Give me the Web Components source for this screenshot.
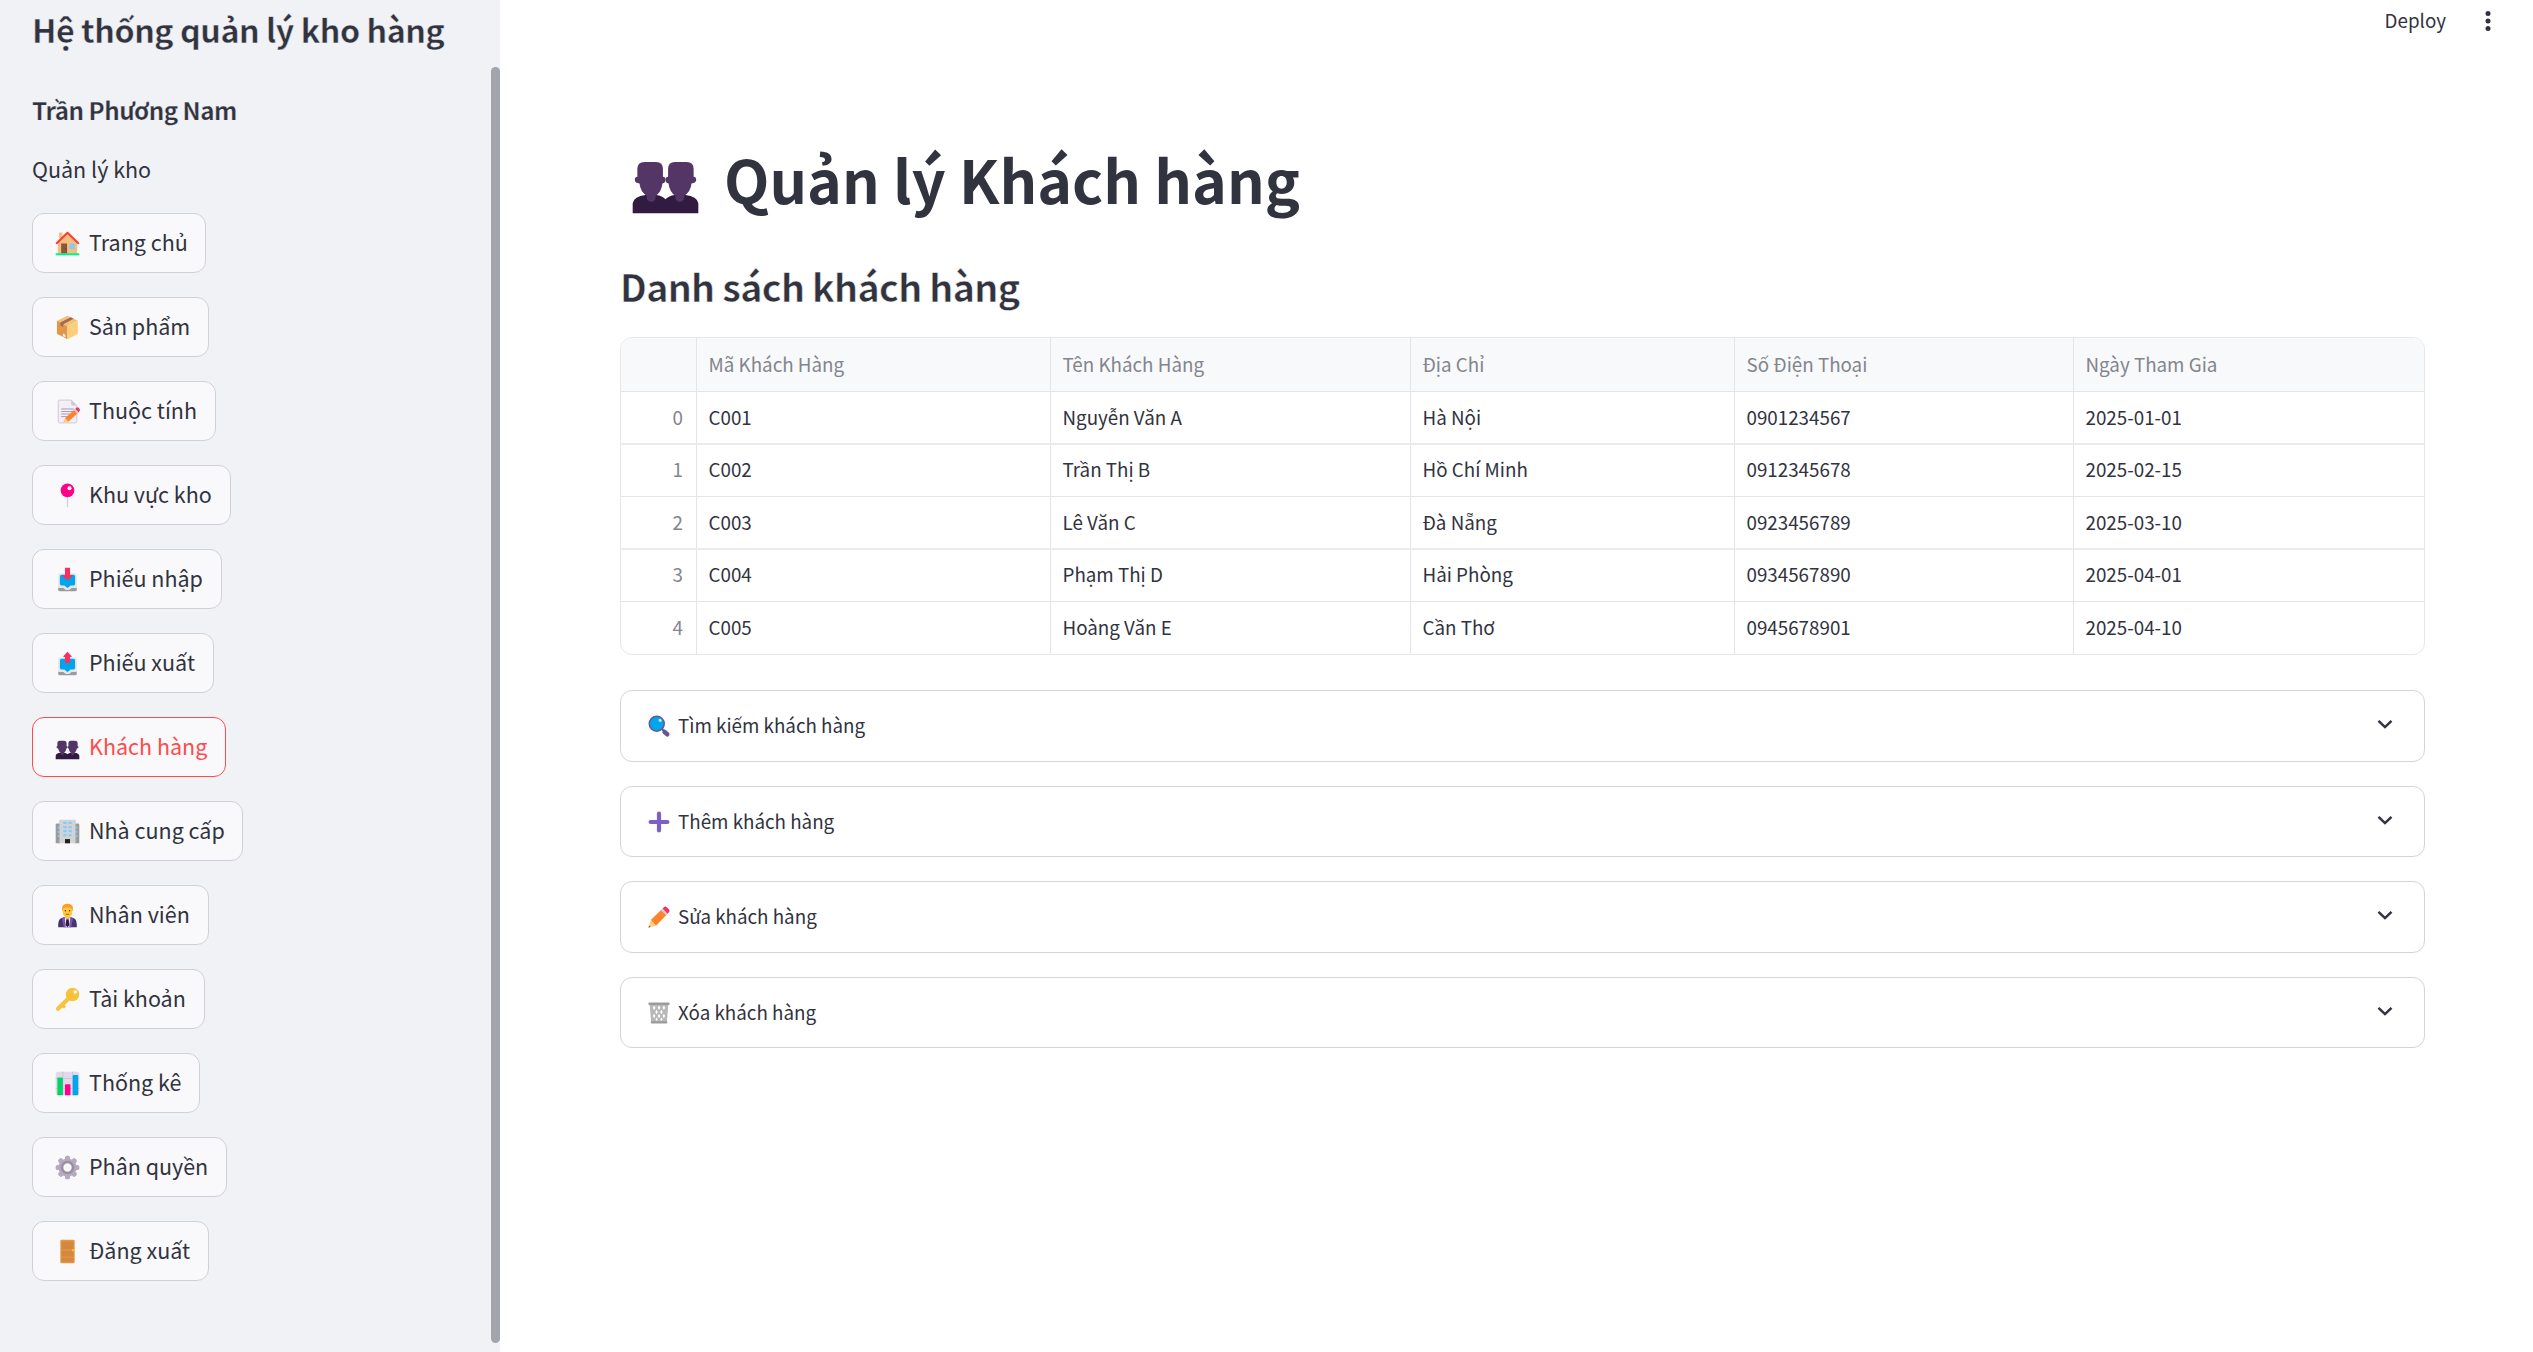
<!DOCTYPE html>
<html lang="vi">
<head>
<meta charset="utf-8">
<title>Quản lý Khách hàng</title>
<style>
  html, body { margin: 0; height: 100%; overflow: hidden; background: #fff; }
  body { font-family: "Noto Sans CJK SC", "Noto Sans", sans-serif; color: #31333f; }
</style>
</head>
<body>
<warehouse-app></warehouse-app>
<script>
const BUST = 'M7 8.1h5q2.900 0 2.900 3v3.300q1.200.100 1.100 1.400t-1.300 1.500q-.400 3.600-2.900 5.200v1q-.300 1.600-1.900 1.600t-1.900-1.600v-1q-2.700-1.600-3.100-5.200Q3 17.100 2.900 15.800t1.100-1.400v-3.300q0-3 3-3z';
const ICONS = {
  home: `<path fill="#f3c07b" d="M6 3h4v7H6z"/><path fill="#f3c07b" d="M16 4 4.5 15v14h23V15z"/><path fill="#8c5543" d="M8.5 16h7v12h-7z"/><path fill="#83cbff" d="M18.5 16h6v6.5h-6z"/><path fill="none" stroke="#ff3838" stroke-width="2.4" stroke-linecap="round" stroke-linejoin="round" d="M3.2 15.6 16 3.2l12.8 12.4"/><path fill="#00f397" d="M2 27.6h28V30H2z"/><circle cx="14" cy="22.3" r=".8" fill="#5a3328"/>`,
  box: `<path fill="#f3c07b" d="M16 2 28.3 8 16 14.6 3.5 8z"/><path fill="#e19747" d="M3.5 8 16 14.6V30L3.5 23.4z"/><path fill="#ffce7c" d="M28.3 8 16 14.6V30l12.3-6.6z"/><path fill="#a56953" d="m19.8 3.9 3.6 1.700L11 12.200v3.200l-3.600-2v-3.200z"/><path fill="#f3eef8" d="m10.500 23 3 1.600v3.300l-3-1.600z"/>`,
  memo: `<path fill="#f3eef8" stroke="#cdc4d6" stroke-width="1.1" d="M5 4q0-1.5 1.5-1.5h14L27 9v19q0 1.5-1.5 1.5h-19Q5 29.500 5 28z"/><path fill="#cdc4d6" d="M20.500 2.500V7.500Q20.500 9 22 9h5z"/><path stroke="#998ea4" stroke-width="1" d="M8.500 13h15M8.500 16h15M8.500 19h12M8.500 22h9"/><path fill="#ff822d" d="m13 24 12-11 4 4.300-12 10.700z"/><path fill="#f92f60" d="m25 13 2-1.800q1.500-.7 2.800.8t.8 2.800L29 17.300z"/><path fill="#d3d3d3" d="m23.500 14.300 1.700-1.500 4 4.400-1.700 1.500z"/><path fill="#ffce7c" d="m13 24 4 4-6.500 1.300z"/>`,
  pin: `<path fill="#d3d3d3" d="M15.200 16h1.600v13.500q-.8 1-1.600 0z"/><circle cx="16" cy="10" r="8.100" fill="#ff008e"/><circle cx="18.400" cy="7.300" r="2.400" fill="#fff"/>`,
  inbox: `<path fill="#9b9b9b" d="M5 25h22v3q0 2-2 2H7q-2 0-2-2z"/><path fill="#e6e6e6" d="M7 9h18q2 0 2 2v15h-6l-3 2.500h-4L11 26H5V11q0-2 2-2z"/><path fill="#00a6ed" d="M9 10.500h14q2 0 2 2V21q0 2-2 2h-3q-1 0-1.700 1.200L16 26l-2.300-1.800Q13 23 12 23H9q-2 0-2-2v-8.500q0-2 2-2z"/><path fill="#f92f60" d="M13 2h6v9h2.500q1 .4.200 1.200L16 17l-5.700-4.800q-.8-.8.200-1.200H13z"/>`,
  outbox: `<path fill="#9b9b9b" d="M5 25h22v3q0 2-2 2H7q-2 0-2-2z"/><path fill="#e6e6e6" d="M7 9h18q2 0 2 2v15h-6l-3 2.500h-4L11 26H5V11q0-2 2-2z"/><path fill="#00a6ed" d="M9 10.500h14q2 0 2 2V21q0 2-2 2h-3q-1 0-1.700 1.200L16 26l-2.300-1.800Q13 23 12 23H9q-2 0-2-2v-8.500q0-2 2-2z"/><path fill="#f92f60" d="M13 15.500h6V8.200h1.500q1-.4.200-1.200L16 2l-4.700 5q-.8.800.2 1.200H13z"/>`,
  people: `<path fill="#321b41" d="M2 30v-4.300q.500-2.900 5.500-3.500H12q2.700.400 4 1.800 1.300-1.400 4-1.800h4.500q5 .600 5.500 3.500V30z"/><path fill="#533566" d="${BUST}"/><path fill="#533566" d="${BUST}" transform="matrix(-1 0 0 1 32 0)"/>`,
  office: `<path fill="#9b9b9b" d="M2 8q0-1.500 1.500-1.500H7V30H2zM30 8q0-1.500-1.500-1.500H25V30h5z"/><path fill="#d3d3d3" d="M6 3.500Q6 2 7.500 2h17Q26 2 26 3.500V30H6z"/><path fill="#b4b4b4" d="M6 7h1v23H6zM25 7h1v23h-1z"/><path fill="#83cbff" d="M11 4.500h4V7h-4zm6 0h4V7h-4zm-6 5h4V12h-4zm6 0h4V12h-4zm-6 4.800h4v2.500h-4zm6 0h4v2.500h-4zm-6 4.900h4v2.500h-4zm6 0h4v2.500h-4zM4.500 10.500H7v2H4.500zm0 5H7v2H4.500zm0 5H7v2H4.500zM25 10.500h2.500v2H25zm0 5h2.500v2H25zm0 5h2.500v2H25z"/><path fill="#212121" d="M13 25h6v5h-6z"/>`,
  worker: `<path fill="#46346b" d="M5 30v-4q0-7 7-8h8q7 1 7 8v4z"/><path fill="#7b54b8" d="m11.500 18 4.500 5 4.500-5 2 1.500L20.500 30h-9l-2-10.500z"/><path fill="#f3eef8" d="m12.700 18 3.300 2 3.300-2L18 30h-4z"/><path fill="#321b41" d="M14.600 20.500h2.800l.8 7L16 30l-2.200-2.500z"/><path fill="#ffc83d" d="M10.300 8q0-5 5.700-5t5.700 5v4q0 3.500-2.700 5.200v1.300L16 20l-3-1.500v-1.300q-2.700-1.700-2.700-5.200z"/><path fill="#ff9b28" d="M9.700 10.500V6.200Q10.500 2 16 2t6.300 4.200v4.300h-1V8.200L19 6.500h-6l-2.300 1.700v2.300z"/><circle cx="13.500" cy="10.400" r=".8" fill="#402a32"/><circle cx="18.500" cy="10.400" r=".8" fill="#402a32"/><path stroke="#d3453d" stroke-width="1.200" d="M14 14.600h4"/>`,
  key: `<circle cx="22" cy="10" r="8" fill="#f9c23c"/><path fill="none" stroke="#f9c23c" stroke-width="5" stroke-linecap="round" d="M18 14 4.800 27"/><path stroke="#f9c23c" stroke-width="3.500" d="m9.500 22.500 3.500 3"/><circle cx="25.200" cy="7" r="2.100" fill="#fff"/>`,
  chart: `<rect x="2" y="2" width="28" height="28" rx="3" fill="#e1d8ec"/><path stroke="#cdc4d6" d="M10.500 2v28M22 2v28M2 10h28M2 22h28" stroke-width="1.200"/><rect x="4" y="9" width="6.500" height="21" rx="1" fill="#00d26a"/><rect x="13" y="17" width="6.500" height="13" rx="1" fill="#ff008e"/><rect x="22.200" y="6" width="6.500" height="24" rx="1" fill="#00a6ed"/>`,
  gear: `<g fill="#b4acbc"><circle cx="16" cy="16" r="10.800"/><rect x="13" y="2" width="6" height="28" rx="2.200"/><rect x="2" y="13" width="28" height="6" rx="2.200"/><g transform="rotate(45 16 16)"><rect x="13" y="2" width="6" height="28" rx="2.200"/><rect x="2" y="13" width="28" height="6" rx="2.200"/></g></g><circle cx="16" cy="16" r="6.500" fill="#f9f9fb" stroke="#998ea4" stroke-width="3"/>`,
  door: `<rect x="7.500" y="2" width="17" height="28" rx="1.500" fill="#e19747"/><path fill="#d3883e" d="M9 4h14v9.500H9zm0 11h14v7H9zm0 8.500h14V28H9z"/><circle cx="22.500" cy="14.500" r="1.100" fill="#fcd53f"/>`,
  search: `<path stroke="#635994" stroke-width="6" stroke-linecap="round" d="m23.500 24 3.500 3"/><path stroke="#635994" stroke-width="3" d="m18 18 6 6"/><circle cx="13" cy="13" r="10" fill="#00a6ed" stroke="#635994" stroke-width="2"/><ellipse cx="17.500" cy="8.500" rx="2.200" ry="1.900" fill="#cdeeff" transform="rotate(35 17.500 8.500)"/>`,
  plus: `<path stroke="#7d5fc8" stroke-width="5.600" stroke-linecap="round" d="M16 4.800v22.400M4.800 16h22.400"/>`,
  pencil: `<path fill="#ff822d" d="M5 20 19.500 6l7 6.500L12 27.500z"/><path fill="#ffce7c" d="m5 20 7 7.500L2 30z"/><path fill="#d3d3d3" d="m18.500 7 2.300-2.200 7 6.700-2.300 2.200z"/><path fill="#f92f60" d="m20.800 4.800 2-2q1.700-1.400 3.500.2l3 3q1.500 1.700.2 3.200l-2.200 2.300z"/><path fill="#7d4533" d="m2.800 27.200 2 2L2 30z"/>`,
  trash: `<path fill="#b8b8b8" d="M3.500 4h25l-2 24h-21z"/><path fill="#fff" d="m9.500 6 1.800 3-1.800 3-1.800-3zm6.500 0 1.800 3-1.800 3-1.800-3zm6.500 0 1.800 3-1.800 3-1.800-3zM12.800 11.500l1.700 3-1.700 3-1.700-3zm6.400 0 1.700 3-1.700 3-1.700-3zM9.500 17l1.700 3-1.700 3-1.700-3zm6.500 0 1.700 3-1.700 3-1.700-3zm6.500 0 1.700 3-1.700 3-1.700-3zM12.800 22l1.500 2.500-1.500 2.200-1.500-2.200zm6.400 0 1.500 2.500-1.500 2.200-1.500-2.200z"/><rect x="2" y="2" width="28" height="3.300" rx="1" fill="#9b9b9b"/><rect x="5" y="27" width="22" height="3" rx="1" fill="#9b9b9b"/>`
};

class EmojiIcon extends HTMLElement {
  connectedCallback() {
    const r = this.attachShadow({ mode: 'open' });
    r.innerHTML = `<style>:host{display:block;flex:none}svg{display:block;width:100%;height:100%}</style>
      <svg viewBox="0 0 32 32">${ICONS[this.getAttribute('name')]}</svg>`;
  }
}
customElements.define('emoji-icon', EmojiIcon);

class NavButton extends HTMLElement {
  connectedCallback() {
    const r = this.attachShadow({ mode: 'open' });
    r.innerHTML = `<style>
      :host{display:block;width:var(--w);height:60px}
      button{display:flex;align-items:center;box-sizing:border-box;width:100%;height:60px;margin:0;padding:0 0 0 21px;
        border:1px solid #d0d1d6;border-radius:12px;background:#f9f9fb;color:inherit;
        font-family:inherit;font-size:21.5px;line-height:38px;white-space:nowrap}
      :host([active]) button{border-color:#ff4b4b;color:#ff4b4b}
      emoji-icon{width:27px;height:27px;margin-right:8px}
      span{padding-bottom:2px}
    </style><button><emoji-icon name="${this.getAttribute('icon')}"></emoji-icon><span><slot></slot></span></button>`;
  }
}
customElements.define('nav-button', NavButton);

class SideBar extends HTMLElement {
  connectedCallback() {
    const items = [
      ['home', 'Trang chủ', 174], ['box', 'Sản phẩm', 177], ['memo', 'Thuộc tính', 184],
      ['pin', 'Khu vực kho', 199], ['inbox', 'Phiếu nhập', 190], ['outbox', 'Phiếu xuất', 182],
      ['people', 'Khách hàng', 194], ['office', 'Nhà cung cấp', 211], ['worker', 'Nhân viên', 177],
      ['key', 'Tài khoản', 173], ['chart', 'Thống kê', 168], ['gear', 'Phân quyền', 195], ['door', 'Đăng xuất', 177]];
    const r = this.attachShadow({ mode: 'open' });
    r.innerHTML = `<style>
      :host{display:flex;width:500px;height:100%;background:#f0f2f6;box-sizing:border-box;flex:none}
      .body{flex:1;padding-left:32px;white-space:nowrap}
      h2,h3{-webkit-text-stroke:.4px #f0f2f6}
      h2{margin:0;font-size:32.24px;font-weight:600;line-height:44px;padding:7px 0 0 0;letter-spacing:-.45px}
      h3{margin:37px 0 0;font-size:24.2px;font-weight:600;line-height:44px;letter-spacing:-.5px;-webkit-text-stroke-width:.25px}
      p{margin:18px 0 0;font-size:21.5px;line-height:38px}
      nav{display:flex;flex-direction:column;gap:24px;margin-top:25px}
      .track{width:9px;padding:67px 0 9px;box-sizing:border-box;display:flex}
      .thumb{flex:1;background:#a3a5ad;border-radius:5px}
    </style>
    <div class="body"><h2>Hệ thống quản lý kho hàng</h2><h3>Trần Phương Nam</h3><p>Quản lý kho</p>
    <nav>${items.map(([i, t, w]) => `<nav-button icon="${i}" style="--w:${w}px"${i === 'people' ? ' active' : ''}>${t}</nav-button>`).join('')}</nav></div>
    <div class="track"><div class="thumb"></div></div>`;
  }
}
customElements.define('side-bar', SideBar);

class TopBar extends HTMLElement {
  connectedCallback() {
    this.attachShadow({ mode: 'open' }).innerHTML = `<style>
      :host{display:flex;justify-content:flex-end;align-items:center;height:42px;padding-right:33px;gap:30px}
      span{font-size:18.8px;line-height:30px;padding-bottom:3px}
      svg{display:block;width:24px;height:24px}
    </style><span>Deploy</span><svg viewBox="0 0 24 24" fill="#31333f"><circle cx="12" cy="4.500" r="2.500"/><circle cx="12" cy="12" r="2.500"/><circle cx="12" cy="19.500" r="2.500"/></svg>`;
  }
}
customElements.define('top-bar', TopBar);

class DataGrid extends HTMLElement {
  connectedCallback() {
    const head = ['', 'Mã Khách Hàng', 'Tên Khách Hàng', 'Địa Chỉ', 'Số Điện Thoại', 'Ngày Tham Gia'];
    const rows = [
      ['0', 'C001', 'Nguyễn Văn A', 'Hà Nội', '0901234567', '2025-01-01'],
      ['1', 'C002', 'Trần Thị B', 'Hồ Chí Minh', '0912345678', '2025-02-15'],
      ['2', 'C003', 'Lê Văn C', 'Đà Nẵng', '0923456789', '2025-03-10'],
      ['3', 'C004', 'Phạm Thị D', 'Hải Phòng', '0934567890', '2025-04-01'],
      ['4', 'C005', 'Hoàng Văn E', 'Cần Thơ', '0945678901', '2025-04-10']];
    const line = (c, cls) => `<div class="row ${cls}">${c.map(t => `<div class="cell">${t}</div>`).join('')}</div>`;
    this.attachShadow({ mode: 'open' }).innerHTML = `<style>
      :host{display:block;box-sizing:border-box;width:1805px;height:318px;border:1px solid #e6e7ea;border-radius:12px;overflow:hidden}
      .row{display:grid;grid-template-columns:76px 354px 360px 324px 339px 1fr;height:52.500px;box-sizing:border-box;border-bottom:1px solid #e4e5e7}
      .row:nth-of-type(even){border-bottom:2px solid #ebebed}
      .row:last-child{border-bottom:0}
      .cell{box-sizing:border-box;border-right:1px solid #e4e5e7;padding-left:11.500px;font-size:18.800px;line-height:50px;white-space:nowrap}
      .row:nth-of-type(odd) .cell{line-height:48px}
      .row.head{height:54px;background:#f8f9fb;color:#83858c}
      .row.head .cell{line-height:52px}
      .cell:first-child{text-align:right;padding:0 13px 0 0;color:#83858c}
      .cell:last-child{border-right:0}
    </style>${line(head, 'head')}${rows.map(x => line(x, '')).join('')}`;
  }
}
customElements.define('data-grid', DataGrid);

class ExpanderPanel extends HTMLElement {
  connectedCallback() {
    this.attachShadow({ mode: 'open' }).innerHTML = `<style>
      :host{display:flex;align-items:center;box-sizing:border-box;width:1805px;height:var(--h,72px);border:1px solid #d3d4d6;border-radius:12px;padding:0 27px 0 26px}
      emoji-icon{width:24px;height:24px;margin-right:7px}
      .t{flex:1;font-size:18.800px;line-height:34px;padding-bottom:2px}
      svg{display:block;width:24px;height:24px;margin-bottom:4px}
    </style><emoji-icon name="${this.getAttribute('icon')}"></emoji-icon><div class="t"><slot></slot></div>
    <svg viewBox="0 0 24 24" fill="none" stroke="#31333f" stroke-width="2.500"><path d="m5.500 8.800 6.500 6.300 6.500-6.300"/></svg>`;
  }
}
customElements.define('expander-panel', ExpanderPanel);

class WarehouseApp extends HTMLElement {
  connectedCallback() {
    this.attachShadow({ mode: 'open' }).innerHTML = `<style>
      :host{display:flex;width:2533px;height:1352px}
      main{flex:1;display:flex;flex-direction:column}
      .content{padding:97px 0 0 120px}
      h1{display:flex;align-items:center;margin:0;height:80px;font-size:59px;font-weight:700;line-height:80px;padding-left:8px;white-space:nowrap}
      h1 emoji-icon{width:75px;height:75px;margin:2px 21px 0 0}
      h2{margin:42px 0 0 0;font-size:37.600px;font-weight:600;line-height:50px;white-space:nowrap;letter-spacing:-.68px;-webkit-text-stroke:.5px #fff}
      data-grid{margin-top:26px}
      .panels{display:flex;flex-direction:column;gap:24px;margin-top:35px}
    </style>
    <side-bar></side-bar>
    <main><top-bar></top-bar><div class="content">
      <h1><emoji-icon name="people"></emoji-icon><span>Quản lý Khách hàng</span></h1>
      <h2>Danh sách khách hàng</h2>
      <data-grid></data-grid>
      <div class="panels">
        <expander-panel icon="search">Tìm kiếm khách hàng</expander-panel>
        <expander-panel icon="plus" style="--h:71px">Thêm khách hàng</expander-panel>
        <expander-panel icon="pencil">Sửa khách hàng</expander-panel>
        <expander-panel icon="trash" style="--h:71px">Xóa khách hàng</expander-panel>
      </div></div></main>`;
  }
}
customElements.define('warehouse-app', WarehouseApp);
</script>
</body>
</html>
